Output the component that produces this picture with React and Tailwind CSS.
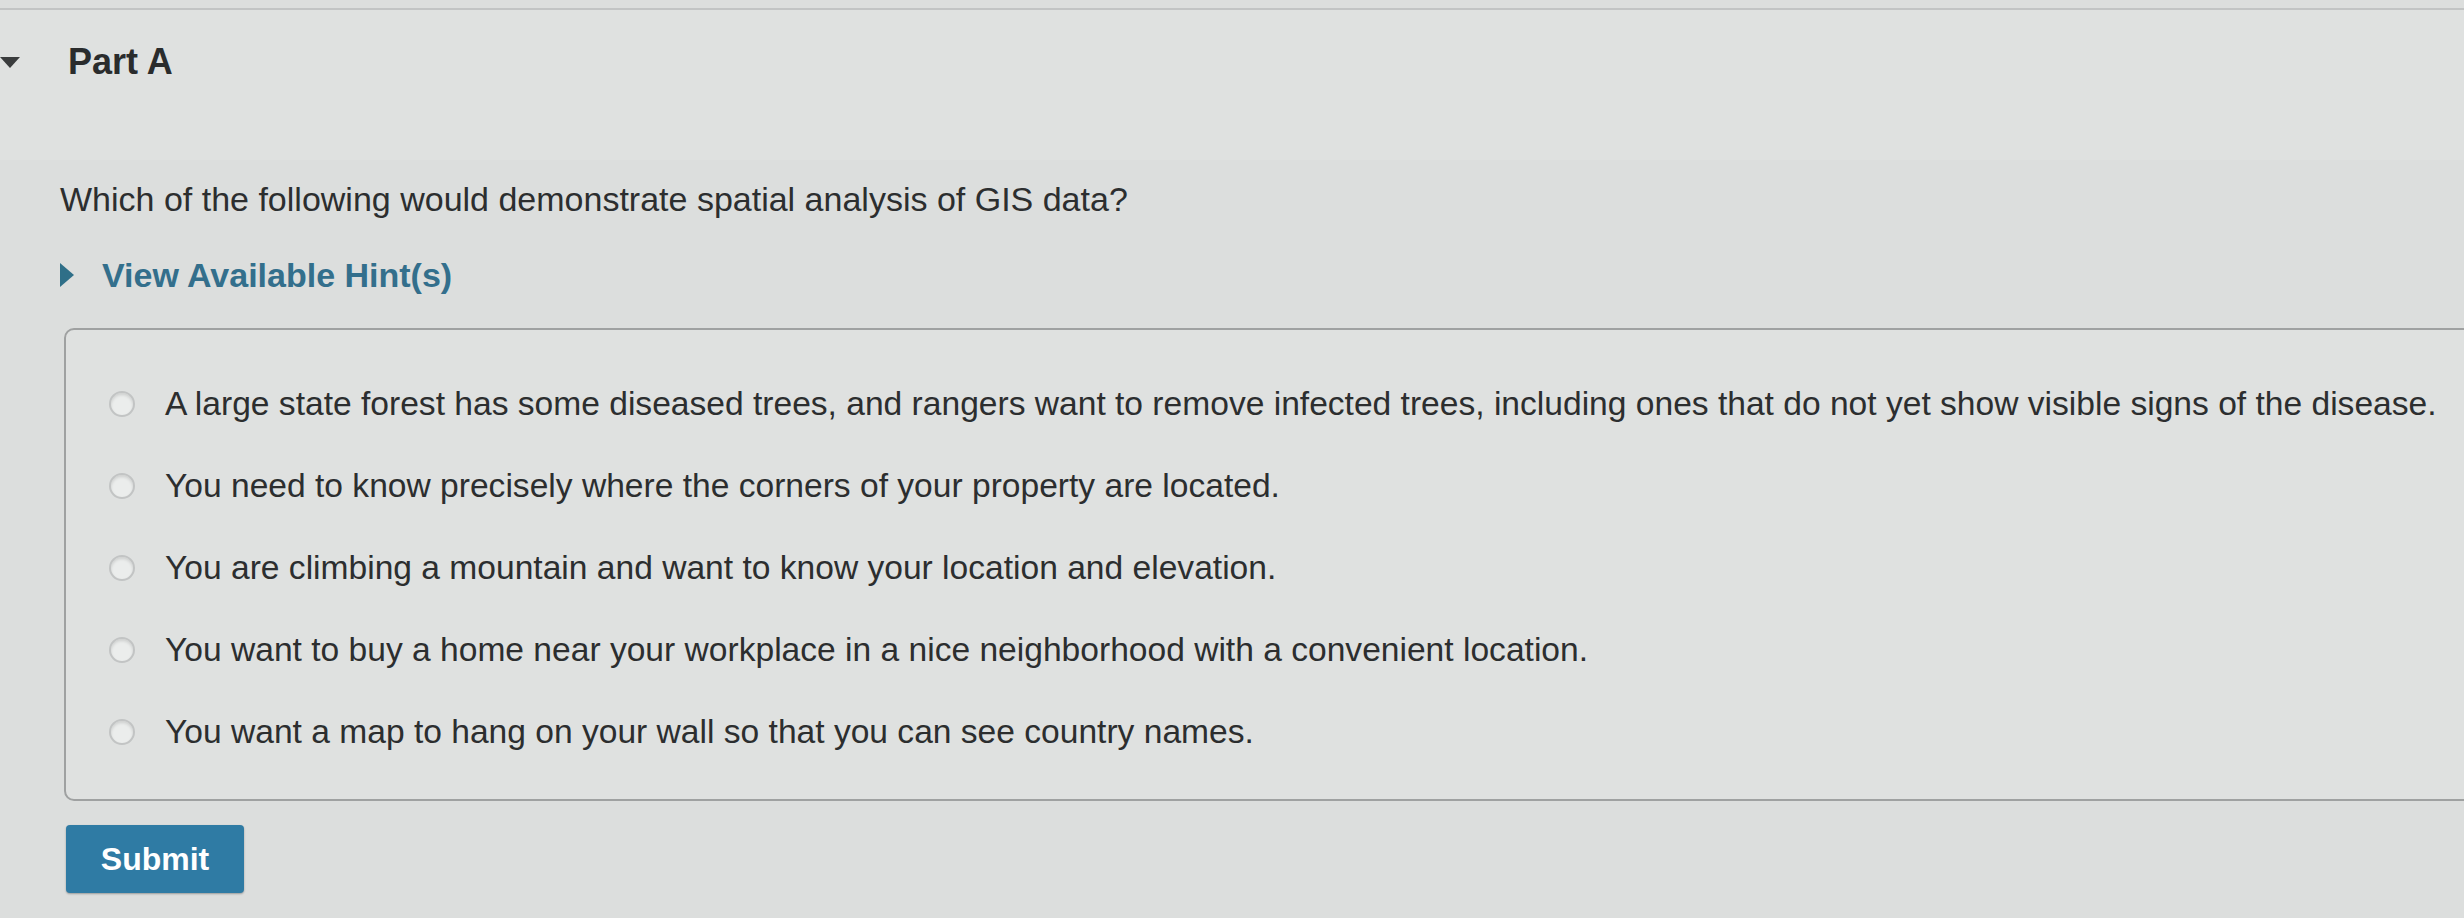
import React from "react";

const OPTIONS = [
  "A large state forest has some diseased trees, and rangers want to remove infected trees, including ones that do not yet show visible signs of the disease.",
  "You need to know precisely where the corners of your property are located.",
  "You are climbing a mountain and want to know your location and elevation.",
  "You want to buy a home near your workplace in a nice neighborhood with a convenient location.",
  "You want a map to hang on your wall so that you can see country names.",
];

function Radio() {
  return (
    <span className="block w-[26px] h-[26px] shrink-0 rounded-full border-2 border-[#c2c4c4] bg-[#ebedec] shadow-[inset_0_2px_3px_rgba(0,0,0,0.12)]" />
  );
}

export default function App() {
  return (
    <div
      className="w-[2464px] h-[918px] overflow-hidden bg-[#dcdedd] text-[#2c2e2f]"
      style={{ fontFamily: '"Liberation Sans", Arial, sans-serif' }}
    >
      {/* header */}
      <div className="mt-[8px] h-[152px] border-t-2 border-[#c2c4c4] bg-[#dfe1e0]">
        <div className="flex items-center pt-[34px]">
          <span className="block w-0 h-0 border-l-[10px] border-r-[10px] border-t-[11px] border-l-transparent border-r-transparent border-t-[#3a3c3d]" />
          <h2 className="ml-[48px] text-[36px] font-bold leading-none text-[#2a2c2d]">Part A</h2>
        </div>
      </div>

      <div className="pl-[60px]">
        <p className="mt-[22px] text-[34px] leading-none">
          Which of the following would demonstrate spatial analysis of GIS data?
        </p>

        <div className="mt-[42px] flex items-center">
          <span className="block w-0 h-0 border-t-[12px] border-b-[12px] border-l-[14px] border-t-transparent border-b-transparent border-l-[#2f6f88]" />
          <span className="ml-[28px] text-[34px] font-bold leading-none text-[#336f8c]">View Available Hint(s)</span>
        </div>

        <div className="mt-[36px] ml-[4px] w-[2460px] h-[473px] rounded-[10px] border-2 border-[#9fa1a1] bg-[#dfe1e0] pl-[43px] pt-[59px]">
          <ul className="flex flex-col gap-[52px]">
            {OPTIONS.map((o) => (
              <li key={o} className="flex items-center gap-[30px]">
                <Radio />
                <span className="text-[33.6px] leading-[30px] whitespace-nowrap">{o}</span>
              </li>
            ))}
          </ul>
        </div>

        <button className="mt-[24px] ml-[6px] w-[178px] h-[68px] rounded-[4px] bg-[#2f7ba4] text-white text-[32px] font-semibold shadow-[0_1px_2px_rgba(0,0,0,0.3)]">
          Submit
        </button>
      </div>
    </div>
  );
}
